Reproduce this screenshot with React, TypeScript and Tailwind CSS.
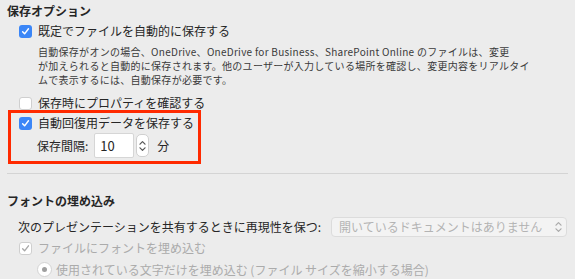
import React from "react";

const FONT = "font-['Noto_Sans_CJK_JP','Noto_Sans',sans-serif]";

function Check({ checked = false, disabled = false }: { checked?: boolean; disabled?: boolean }) {
  if (checked && !disabled) {
    return (
      <span className="flex h-[13px] w-[13px] shrink-0 items-center justify-center rounded-[3px] bg-[#3b86f7]">
        <svg width="9" height="9" viewBox="0 0 10 10" fill="none">
          <path d="M1.8 5.3 L4 7.6 L8.3 2" stroke="white" strokeWidth="1.6" strokeLinecap="round" strokeLinejoin="round" />
        </svg>
      </span>
    );
  }
  return (
    <span className="flex h-[13px] w-[13px] shrink-0 items-center justify-center rounded-[3px] border border-[#cfcfcf] bg-white">
      {checked && (
        <svg width="9" height="9" viewBox="0 0 10 10" fill="none">
          <path d="M1.8 5.3 L4 7.6 L8.3 2" stroke="#a8a8a8" strokeWidth="1.5" strokeLinecap="round" strokeLinejoin="round" />
        </svg>
      )}
    </span>
  );
}

function Chevrons({ color }: { color: string }) {
  return (
    <svg width="7" height="12" viewBox="0 0 7 12" fill="none">
      <path d="M1 4.2 L3.5 1.6 L6 4.2" stroke={color} strokeWidth="1.2" strokeLinecap="round" strokeLinejoin="round" />
      <path d="M1 7.8 L3.5 10.4 L6 7.8" stroke={color} strokeWidth="1.2" strokeLinecap="round" strokeLinejoin="round" />
    </svg>
  );
}

export default function App() {
  return (
    <div className={`h-[279px] w-[575px] overflow-hidden bg-[#ececec] text-[#262626] ${FONT}`}>
      <div className="px-[7px] pt-[4px]">
        <h2 className="text-[12px] font-bold leading-[14px]">保存オプション</h2>

        <label className="mt-[6px] flex h-[14px] items-center gap-[6px] pl-[12px] text-[12px] leading-[14px]">
          <Check checked />
          <span>既定でファイルを自動的に保存する</span>
        </label>
        <p className="mt-[7px] ml-[31px] whitespace-nowrap text-[10px] leading-[14px] tracking-[0.28px] text-[#3a3a3a]">
          自動保存がオンの場合、OneDrive、OneDrive for Business、SharePoint Online のファイルは、変更
          <br />
          が加えられると自動的に保存されます。他のユーザーが入力している場所を確認し、変更内容をリアルタイ
          <br />
          ムで表示するには、自動保存が必要です。
        </p>

        <label className="mt-[9px] flex h-[14px] items-center gap-[6px] pl-[12px] text-[12px] leading-[14px]">
          <Check />
          <span>保存時にプロパティを確認する</span>
        </label>

        <div className="ml-[1px] w-[193px] border-[3px] border-[#ff2a00] pb-[3px] pt-[3px] pl-[8px]">
          <label className="flex h-[14px] items-center gap-[6px] text-[12px] leading-[14px]">
            <Check checked />
            <span>自動回復用データを保存する</span>
          </label>
          <div className="mt-[3px] flex h-[25px] items-center pl-[18px] text-[12px]">
            <span>保存間隔:</span>
            <span className="ml-[6px] flex h-[25px] w-[40px] items-center rounded-[2px] border border-[#d6d6d6] bg-white pl-[5px] text-[13px]">
              10
            </span>
            <span className="ml-[2px] flex h-[23px] w-[13px] items-center justify-center rounded-[5px] border border-[#d0d0d0] bg-white">
              <Chevrons color="#555" />
            </span>
            <span className="ml-[8px]">分</span>
          </div>
        </div>

        <div className="mt-[9px] h-px w-[561px] bg-[#d4d4d4]" />

        <h2 className="mt-[20px] text-[12px] font-bold leading-[14px]">フォントの埋め込み</h2>

        <div className="mt-[9px] flex h-[20px] items-center pl-[11px] text-[12px] leading-[14px]">
          <span className="w-[313px]">次のプレゼンテーションを共有するときに再現性を保つ:</span>
          <span className="flex h-[20px] w-[236px] items-center justify-between rounded-[4px] border border-[#dcdcdc] bg-[#f3f3f3] pl-[7px] pr-[4px] text-[#b3b3b3]">
            <span>開いているドキュメントはありません</span>
            <Chevrons color="#a9a9a9" />
          </span>
        </div>

        <label className="mt-[4px] flex h-[14px] items-center gap-[6px] pl-[12px] text-[12px] leading-[14px] text-[#ababab]">
          <Check checked disabled />
          <span>ファイルにフォントを埋め込む</span>
        </label>

        <label className="mt-[7px] flex h-[15px] items-center gap-[4px] pl-[30px] text-[12px] leading-[14px] text-[#ababab]">
          <span className="flex h-[15px] w-[15px] shrink-0 items-center justify-center rounded-full border border-[#d3d3d3] bg-white">
            <span className="h-[5px] w-[5px] rounded-full bg-[#9f9f9f]" />
          </span>
          <span>使用されている文字だけを埋め込む (ファイル サイズを縮小する場合)</span>
        </label>
      </div>
    </div>
  );
}
